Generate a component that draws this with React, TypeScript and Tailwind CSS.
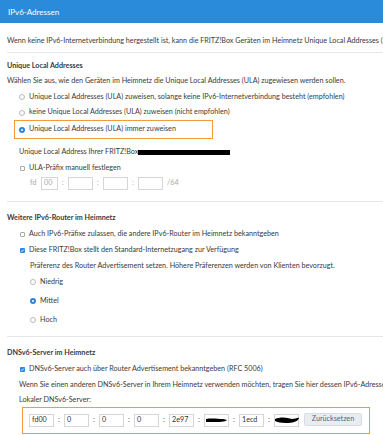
import React from "react";

function Radio({ checked }: { checked?: boolean }) {
  if (checked) {
    return (
      <span className="flex h-[6px] w-[6px] shrink-0 items-center justify-center rounded-full bg-[#2f84d6]">
        <span className="h-[2px] w-[2px] rounded-full bg-white" />
      </span>
    );
  }
  return <span className="h-[6px] w-[6px] shrink-0 rounded-full border border-[#b9b9b9] bg-white" />;
}

function Check({ checked }: { checked?: boolean }) {
  if (checked) {
    return (
      <span className="flex h-[5px] w-[5px] shrink-0 items-center justify-center rounded-[1px] bg-[#2f84d6]">
        <svg viewBox="0 0 10 10" className="h-[5px] w-[5px]">
          <path d="M2 5.2 L4.2 7.3 L8 2.8" fill="none" stroke="white" strokeWidth="1.6" />
        </svg>
      </span>
    );
  }
  return <span className="h-[5px] w-[5px] shrink-0 rounded-[1px] border border-[#a9a9a9] bg-white" />;
}

function Divider() {
  return <div className="ml-[7px] h-px bg-[#e6e6e6]" />;
}

function Field({ value, w = "w-[25px]", dim }: { value?: string; w?: string; dim?: boolean }) {
  return (
    <span
      className={`flex h-[13px] ${w} shrink-0 items-center border border-[#d6d6d6] bg-white px-[2px] ${
        dim ? "text-[#a8a8a8]" : "text-[#333]"
      }`}
    >
      {value}
    </span>
  );
}

function Colon({ dim }: { dim?: boolean }) {
  return (
    <span className={`flex w-[10px] shrink-0 justify-center ${dim ? "text-[#a8a8a8]" : "text-[#444]"}`}>:</span>
  );
}

function Scribble({ wide }: { wide?: boolean }) {
  return (
    <svg viewBox="0 0 25 13" className="absolute inset-0 h-[13px] w-[25px]">
      {wide ? (
        <path d="M1 5 C6 3 12 3 18 5 C21 5 24 3 25 4 C24 8 18 9 12 9 C7 9 3 8 1 7 Z" fill="black" />
      ) : (
        <path d="M2 5 C8 4 14 5 19 5 L23 6 C21 8 15 8 9 8 L2 8 Z" fill="black" />
      )}
    </svg>
  );
}

export default function App() {
  return (
    <div
      className="h-[435px] w-full overflow-hidden bg-white text-[7.2px] text-[#3a3a3a]"
      style={{ fontFamily: "Lato, 'Noto Sans', sans-serif" }}
    >
      <div className="flex h-[23px] items-center bg-[#2b8bdb] px-[8px] text-[8px] text-white">IPv6-Adressen</div>

      <div className="mt-[10px] flex h-[16px] items-center overflow-hidden whitespace-nowrap pl-[7px]">
        Wenn keine IPv6-Internetverbindung hergestellt ist, kann die FRITZ!Box Geräten im Heimnetz Unique Local Addresses (ULA) zuweisen.
      </div>
      <div className="mt-[3px]">
        <Divider />
      </div>

      <div className="mt-[5px] flex h-[16px] items-center pl-[7px] font-bold">Unique Local Addresses</div>
      <div className="flex h-[15px] items-center whitespace-nowrap pl-[7px]">
        Wählen Sie aus, wie den Geräten im Heimnetz die Unique Local Addresses (ULA) zugewiesen werden sollen.
      </div>
      <div className="flex h-[16px] items-center gap-[4px] whitespace-nowrap pl-[19px]">
        <Radio />
        Unique Local Addresses (ULA) zuweisen, solange keine IPv6-Internetverbindung besteht (empfohlen)
      </div>
      <div className="flex h-[15px] items-center gap-[4px] whitespace-nowrap pl-[19px]">
        <Radio />
        keine Unique Local Addresses (ULA) zuweisen (nicht empfohlen)
      </div>
      <div className="ml-[14px] flex h-[19px] w-[199px] items-center gap-[4px] whitespace-nowrap border-[1.5px] border-[#f39a3a] pl-[4px]">
        <Radio checked />
        Unique Local Addresses (ULA) immer zuweisen
      </div>

      <div className="mt-[6px] flex h-[15px] items-center whitespace-nowrap pl-[19px]">
        Unique Local Address Ihrer FRITZ!Box
        <span className="h-[5px] w-[92px] bg-black" />
      </div>
      <div className="flex h-[16px] items-center gap-[4px] whitespace-nowrap pl-[20px]">
        <Check />
        ULA-Präfix manuell festlegen
      </div>
      <div className="flex h-[15px] items-center whitespace-nowrap pl-[30px] text-[#a8a8a8]">
        <span className="w-[11px]">fd</span>
        <Field value="00" w="w-[17px]" dim />
        <Colon dim />
        <Field />
        <Colon dim />
        <Field />
        <Colon dim />
        <Field />
        <span className="ml-[4px]">/64</span>
      </div>

      <div className="mt-[10px]">
        <Divider />
      </div>

      <div className="mt-[8px] flex h-[16px] items-center pl-[7px] font-bold">Weitere IPv6-Router im Heimnetz</div>
      <div className="flex h-[16px] items-center gap-[4px] whitespace-nowrap pl-[20px]">
        <Check />
        Auch IPv6-Präfixe zulassen, die andere IPv6-Router im Heimnetz bekanntgeben
      </div>
      <div className="flex h-[16px] items-center gap-[4px] whitespace-nowrap pl-[20px]">
        <Check checked />
        Diese FRITZ!Box stellt den Standard-Internetzugang zur Verfügung
      </div>
      <div className="flex h-[16px] items-center whitespace-nowrap pl-[30px]">
        Präferenz des Router Advertisement setzen. Höhere Präferenzen werden von Klienten bevorzugt.
      </div>
      <div className="flex h-[16px] items-center gap-[4px] pl-[30px]">
        <Radio />
        Niedrig
      </div>
      <div className="mt-[2px] flex h-[18px] items-center gap-[4px] pl-[30px]">
        <Radio checked />
        Mittel
      </div>
      <div className="mt-[1px] flex h-[18px] items-center gap-[4px] pl-[30px]">
        <Radio />
        Hoch
      </div>

      <div className="mt-[7px]">
        <Divider />
      </div>

      <div className="mt-[8px] flex h-[16px] items-center pl-[7px] font-bold">DNSv6-Server im Heimnetz</div>
      <div className="flex h-[16px] items-center gap-[4px] whitespace-nowrap pl-[20px]">
        <Check checked />
        DNSv6-Server auch über Router Advertisement bekanntgeben (RFC 5006)
      </div>
      <div className="flex h-[16px] items-center overflow-hidden whitespace-nowrap pl-[19px]">
        Wenn Sie einen anderen DNSv6-Server in Ihrem Heimnetz verwenden möchten, tragen Sie hier dessen IPv6-Adresse ein.
      </div>
      <div className="flex h-[14px] items-center pl-[19px]">Lokaler DNSv6-Server:</div>
      <div className="ml-[22px] flex h-[27px] w-[348px] items-center border-[1.5px] border-[#f39a3a] pl-[6px]">
        <Field value="fd00" />
        <Colon />
        <Field value="0" />
        <Colon />
        <Field value="0" />
        <Colon />
        <Field value="0" />
        <Colon />
        <Field value="2e97" />
        <Colon />
        <span className="relative">
          <Field />
          <Scribble />
        </span>
        <Colon />
        <Field value="1ecd" />
        <Colon />
        <span className="relative">
          <Field />
          <Scribble wide />
        </span>
        <span className="mb-[3px] ml-[5px] flex h-[13px] w-[58px] items-center justify-center rounded-[2px] border border-[#d8dde3] bg-[#e9edf1] text-[#4b6584]">
          Zurücksetzen
        </span>
      </div>
      <div className="mt-[2px]">
        <Divider />
      </div>
    </div>
  );
}
